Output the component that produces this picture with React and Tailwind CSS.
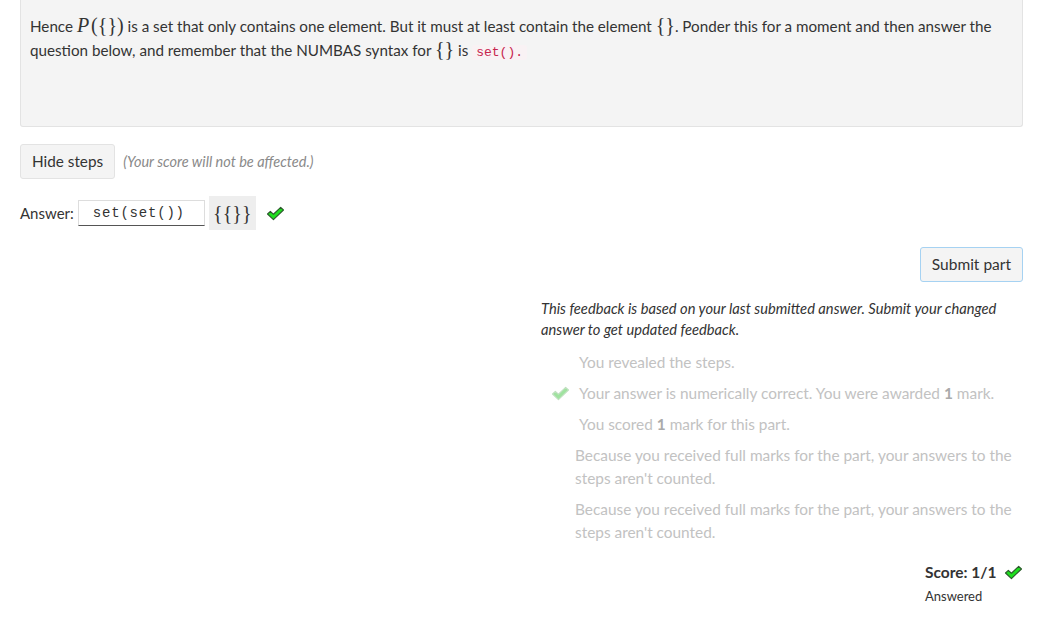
import React from "react";

function Check({ light = false, className = "" }) {
  return (
    <svg viewBox="0 0 20 16" className={className} width="19" height="15">
      <path
        d="M1.5 8.5 L4.5 5.8 L7.8 8.8 L15.5 1.5 L18.5 4.3 L7.8 14.5 Z"
        fill={light ? "#9fe39f" : "#1ee01e"}
        stroke={light ? "#bfe0bf" : "#2a5a2a"}
        strokeWidth="1.2"
        strokeLinejoin="round"
      />
    </svg>
  );
}

function M({ children, italic }) {
  return (
    <span
      className={
        "font-['Liberation_Serif',serif] text-[20px] leading-none " +
        (italic ? "italic pr-[2px]" : "")
      }
    >
      {children}
    </span>
  );
}

export default function App() {
  return (
    <div className="min-h-screen bg-white pl-5 pr-[23px] font-['Lato',sans-serif] text-[#333]">
      {/* question box */}
      <div className="h-[127px] rounded-b-[3px] border border-t-0 border-[#e3e3e3] bg-[#f4f4f4] px-[9px] pt-[14px] text-[15.2px] leading-[24px]">
        <p>
          Hence <M italic>P</M>
          <M>({"{}"})</M> is a set that only contains one element. But it must
          at least contain the element <M>{"{}"}</M>. Ponder this for a moment
          and then answer the question below, and remember that the NUMBAS
          syntax for <M>{"{}"}</M> is{" "}
          <code className="rounded-[3px] bg-[#f9f2f4] px-1 font-['Liberation_Mono',monospace] text-[13px] text-[#c7254e]">
            set().
          </code>
        </p>
      </div>

      {/* steps */}
      <div className="mt-[17px] flex items-center">
        <button className="h-[35px] rounded-[3px] border border-[#e3e3e3] bg-[#f4f4f4] px-[11px] text-[15.3px] text-[#333]">
          Hide steps
        </button>
        <span className="ml-2 text-[14.5px] italic text-[#8a8a8a]">
          (Your score will not be affected.)
        </span>
      </div>

      {/* answer */}
      <div className="mt-[17px] flex items-center">
        <span className="text-[15px]">Answer:</span>
        <div className="ml-[4px] flex h-[26px] w-[127px] items-center border border-[#ddd] border-b-[#555] bg-white pl-[14px] font-['Liberation_Mono',monospace] text-[14px] tracking-[0.8px] text-[#333]">
          set(set())
        </div>
        <div className="ml-[4px] flex h-[34px] w-[47px] items-center justify-center bg-[#eee]">
          <M>{"{{}}"}</M>
        </div>
        <Check className="ml-[10px]" />
      </div>

      {/* submit */}
      <div className="mt-[17px] flex justify-end">
        <button className="h-[35px] rounded-[3px] border border-[#a6d2f2] bg-[#f4f4f4] px-[11px] text-[15.5px] text-[#333]">
          Submit part
        </button>
      </div>

      {/* feedback */}
      <div className="ml-auto mt-[16px] w-[482px]">
        <p className="text-[14.7px] italic leading-[21px] text-[#333]">
          This feedback is based on your last submitted answer. Submit your
          changed answer to get updated feedback.
        </p>
        <div className="mt-[11px] text-[15.4px] leading-[23px] text-[#c2c2c2]">
          <div className="flex items-center">
            <span className="w-[38px]" />
            <span>You revealed the steps.</span>
          </div>
          <div className="mt-[8px] flex items-center">
            <span className="flex w-[38px] justify-end pr-[9px]">
              <Check light />
            </span>
            <span>
              Your answer is numerically correct. You were awarded{" "}
              <b className="text-[#aaa]">1</b> mark.
            </span>
          </div>
          <div className="mt-[8px] flex items-center">
            <span className="w-[38px]" />
            <span>
              You scored <b className="text-[#aaa]">1</b> mark for this part.
            </span>
          </div>
          <p className="mt-[8px] pl-[34px]">
            Because you received full marks for the part, your answers to the
            steps aren't counted.
          </p>
          <p className="mt-[8px] pl-[34px]">
            Because you received full marks for the part, your answers to the
            steps aren't counted.
          </p>
        </div>
      </div>

      {/* score */}
      <div className="mt-[17px] flex justify-end">
        <div className="w-[98px]">
          <div className="flex items-center justify-between">
            <span className="text-[15.5px] font-bold">Score: 1/1</span>
            <Check />
          </div>
          <div className="mt-[3px] text-[13px]">Answered</div>
        </div>
      </div>
    </div>
  );
}
